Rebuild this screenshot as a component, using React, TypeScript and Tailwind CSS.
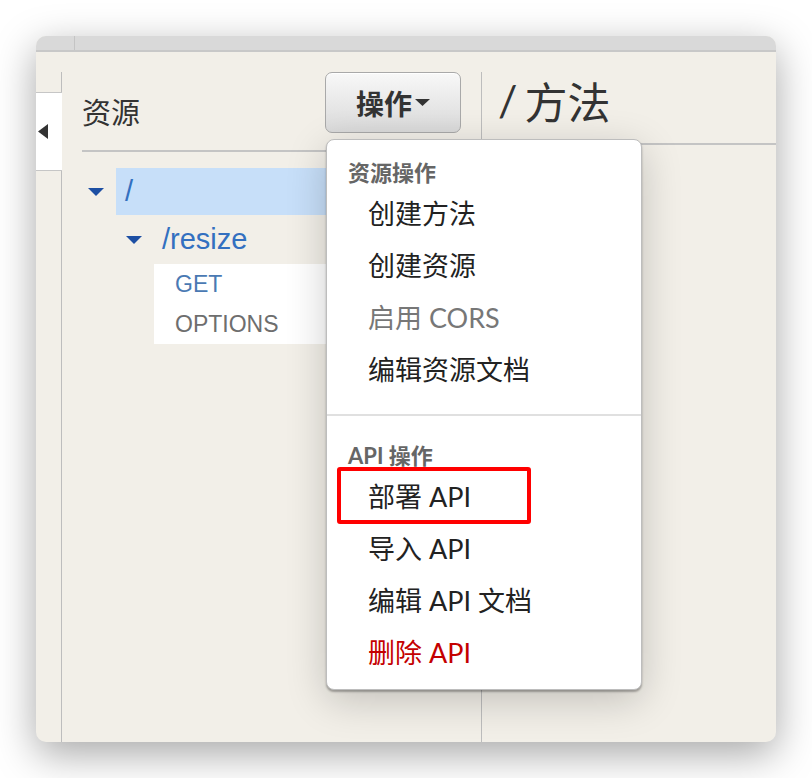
import React from "react";

const CJK = "'Noto Sans CJK SC', sans-serif";
const LATO = "Lato, 'Noto Sans CJK SC', sans-serif";
const ARIAL = "'Liberation Sans', 'Noto Sans CJK SC', sans-serif";

function Down({ w = 16, h = 8, color = "#1d4fa3" }: { w?: number; h?: number; color?: string }) {
  return (
    <svg width={w} height={h} viewBox={`0 0 ${w} ${h}`} className="shrink-0">
      <polygon points={`0,0 ${w},0 ${w / 2},${h}`} fill={color} />
    </svg>
  );
}

function MenuItem({ label, color = "#222" }: { label: string; color?: string }) {
  return (
    <div className="h-[52px] flex items-center pl-[41px] text-[27px]" style={{ color }}>
      {label}
    </div>
  );
}

function MenuHeader({ label }: { label: string }) {
  return (
    <div className="h-[32px] flex items-center pl-[21px] text-[22px] font-bold text-[#666]">{label}</div>
  );
}

export default function App() {
  return (
    <div className="relative w-[812px] h-[778px] bg-white pl-[36px] pt-[36px]" style={{ fontFamily: LATO }}>
      {/* window */}
      <div className="w-[740px] h-[706px] rounded-[10px] overflow-hidden bg-[#f2efe8] flex flex-col shadow-[0_12px_40px_rgba(0,0,0,0.35)]">
        {/* top strip */}
        <div className="h-[16px] bg-[#d9d9d9] border-b-2 border-[#c8c8c8] flex">
          <div className="w-[39px] border-r border-[#c4c4c4]" />
        </div>
        {/* body */}
        <div className="flex-1 flex">
          {/* collapse strip */}
          <div className="w-[26px] flex flex-col">
            <div className="h-[20px]" />
            <div className="flex-1 border-r border-[#bdbdbd]">
              <div className="mt-[20px] h-[79px] bg-white border-y border-[#c6c6c6] flex items-center pl-[2px] -mr-px">
                <svg width="10" height="15" viewBox="0 0 10 15">
                  <polygon points="10,0 10,15 0,7.5" fill="#333" />
                </svg>
              </div>
            </div>
          </div>
          {/* resources panel */}
          <div className="w-[420px] flex flex-col">
            <div className="h-[20px]" />
            <div className="flex-1 border-r border-[#bdbdbd] flex flex-col">
              <div className="mx-[20px] h-[80px] border-b-2 border-[#c4c4c4] flex items-start">
                <div className="mt-[24px] text-[29px] leading-[30px] text-[#333]" style={{ fontFamily: CJK }}>
                  资源
                </div>
                <div className="ml-auto w-[136px] h-[61px] rounded-[7px] border border-[#a9a9a9] bg-gradient-to-b from-[#f8f8f8] to-[#dadada] shadow-[inset_0_1px_0_#fff] flex items-center justify-center gap-[3px]">
                  <span className="text-[28px] font-bold text-[#333]" style={{ fontFamily: CJK }}>
                    操作
                  </span>
                  <Down w={15} h={7} color="#333" />
                </div>
              </div>
              {/* tree */}
              <div className="pt-[16px] pr-[20px] flex flex-col" style={{ fontFamily: ARIAL }}>
                <div className="h-[47px] flex items-center pl-[26px]">
                  <Down />
                  <div className="ml-[12px] flex-1 h-full bg-[#c7dff9] flex items-center pl-[9px] text-[29px] text-[#3370c0]">
                    /
                  </div>
                </div>
                <div className="h-[49px] flex items-center pl-[64px]">
                  <Down />
                  <div className="ml-[20px] text-[29px] text-[#3370c0]">/resize</div>
                </div>
                <div className="ml-[92px] bg-white flex flex-col">
                  <div className="h-[40px] flex items-center pl-[21px] text-[23px] text-[#4a79b3]">GET</div>
                  <div className="h-[40px] flex items-center pl-[21px] text-[23px] text-[#6e6e6e]">OPTIONS</div>
                </div>
              </div>
            </div>
          </div>
          {/* methods panel */}
          <div className="flex-1 flex flex-col">
            <div className="h-[20px]" />
            <div className="h-[73px] border-b-2 border-[#c4c4c4] pl-[16px] pt-[6px]">
              <div className="flex items-center text-[43px] leading-[44px] text-[#333]">
                <span>/</span>
                <span className="ml-[7px]" style={{ fontFamily: CJK }}>
                  方法
                </span>
              </div>
            </div>
          </div>
        </div>
      </div>

      {/* dropdown menu */}
      <div className="absolute left-[326px] top-[139px] w-[316px] h-[551px] bg-white rounded-[8px] border border-[#bdbdbd] shadow-[0_2px_2px_rgba(0,0,0,0.3),0_10px_40px_rgba(0,0,0,0.2)] pt-[16px]">
        <MenuHeader label="资源操作" />
        <MenuItem label="创建方法" />
        <MenuItem label="创建资源" />
        <MenuItem label="启用 CORS" color="#777" />
        <MenuItem label="编辑资源文档" />
        <div className="mt-[18px] border-t-2 border-[#e0e0e0]" />
        <div className="h-[23px]" />
        <MenuHeader label="API 操作" />
        <MenuItem label="部署 API" />
        <MenuItem label="导入 API" />
        <MenuItem label="编辑 API 文档" />
        <MenuItem label="删除 API" color="#c40000" />
        {/* highlight box */}
        <div className="absolute left-[10px] top-[327px] w-[194px] h-[57px] border-[4px] border-[#ff0000] rounded-[3px]" />
      </div>
    </div>
  );
}
